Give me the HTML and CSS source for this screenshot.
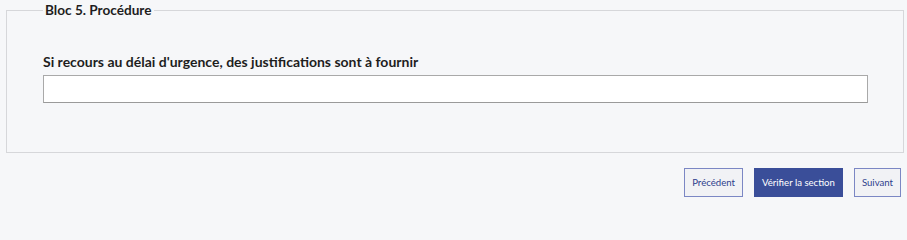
FILE: index.html
```html
<!DOCTYPE html>
<html lang="fr">
<head>
<meta charset="utf-8">
<title>Bloc 5. Procédure</title>
<link rel="stylesheet" href="styles.css">
</head>
<body>
<form class="form">
  <fieldset class="block">
    <legend class="block-title">Bloc 5. Procédure</legend>
    <label class="field-label" for="justif">Si recours au délai d'urgence, des justifications sont à fournir</label>
    <input class="field-input" id="justif" type="text">
  </fieldset>
  <div class="actions">
    <button type="button" class="btn btn-outline">Précédent</button>
    <button type="button" class="btn btn-primary">Vérifier la section</button>
    <button type="button" class="btn btn-outline">Suivant</button>
  </div>
</form>
</body>
</html>
```
FILE: styles.css
```css
html, body {
  margin: 0;
  padding: 0;
  background: #f6f7f9;
}
body {
  font-family: Lato, "Open Sans", Arial, sans-serif;
  color: #1e1e1e;
}
.form {
  display: flex;
  flex-direction: column;
  padding-top: 1px;
}
.block {
  margin: 0 3px 0 6px;
  padding: 34px 35px 49px 36px;
  border: 1px solid #d6d7da;
  background: #f6f7f9;
  min-width: 0;
}
.block-title {
  padding: 0 2px;
  font-size: 13.6px;
  font-weight: 700;
  line-height: 18px;
  color: #1e1e1e;
}
.field-label {
  display: block;
  font-size: 14px;
  font-weight: 700;
  line-height: 17px;
  margin-bottom: 5px;
}
.field-input {
  display: block;
  box-sizing: border-box;
  width: 100%;
  height: 28px;
  margin: 0;
  border: 1px solid #a9a9a9;
  border-bottom-color: #9a9a9a;
  background: #fff;
  font: inherit;
}
.actions {
  display: flex;
  justify-content: flex-end;
  gap: 11px;
  margin-top: 15px;
  padding-right: 6px;
}
.btn {
  box-sizing: border-box;
  height: 29px;
  padding: 0 7px;
  font-family: Lato, "Open Sans", Arial, sans-serif;
  font-size: 9.6px;
  line-height: 27px;
  border: 1px solid #7b87c4;
  cursor: pointer;
}
.btn-outline {
  background: #f1f2f5;
  color: #2e3e8c;
}
.btn-primary {
  background: #3a4e99;
  border-color: #3a4e99;
  color: #ffffff;
}
```
